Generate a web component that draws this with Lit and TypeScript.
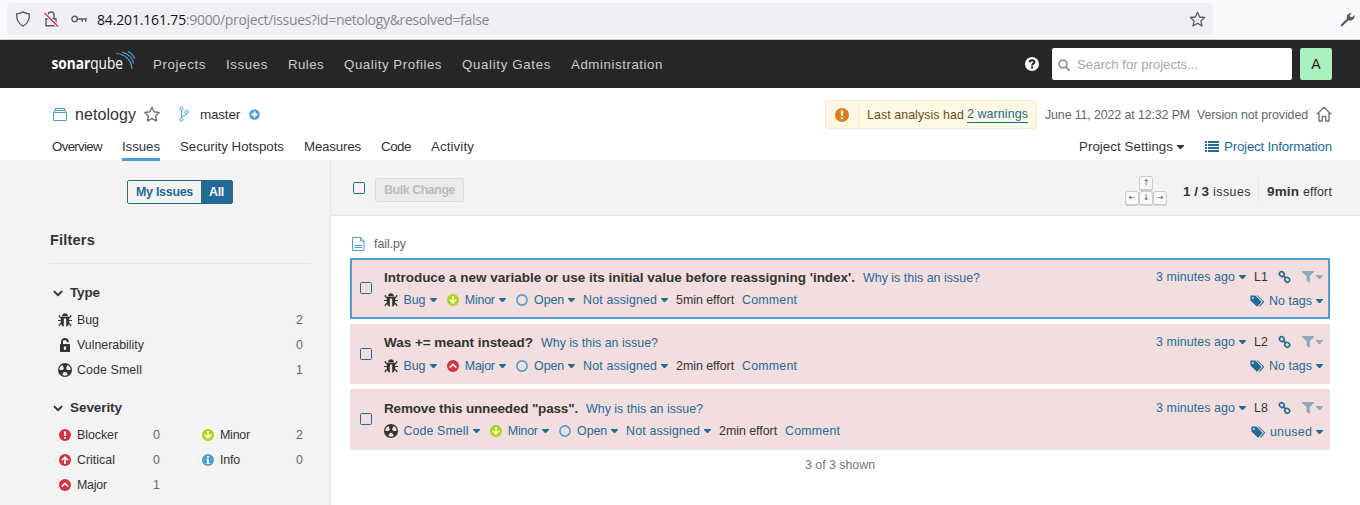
import { LitElement, html, css, svg, TemplateResult } from "lit";
import { customElement, property } from "lit/decorators.js";

/* A run of text whose tracking is computed so that it fills a given width. */
@customElement("ui-text")
class UiText extends LitElement {
  @property() t = "";
  @property({ type: Number }) w = 0;
  static styles = css`
    :host { display: inline-block; white-space: pre; flex: none; }
  `;
  render() {
    return html`<span>${this.t}</span>`;
  }
  updated() {
    const span = this.renderRoot.querySelector("span") as HTMLElement;
    this.style.letterSpacing = "0px";
    const natural = span.getBoundingClientRect().width;
    this.style.letterSpacing = `${(this.w - natural) / this.t.length}px`;
    this.style.width = `${this.w}px`;
  }
}

const T = (t: string, w: number, cls = "") => html`<ui-text class=${cls} t=${t} w=${w}></ui-text>`;

const sector = (deg: number) => {
  const p = (r: number, a: number) => {
    const q = (a * Math.PI) / 180;
    return `${(7 + r * Math.cos(q)).toFixed(2)} ${(7 + r * Math.sin(q)).toFixed(2)}`;
  };
  return `M${p(2, deg - 30)}L${p(5.6, deg - 31)}A5.6 5.6 0 0 1 ${p(5.6, deg + 31)}L${p(2, deg + 30)}A2 2 0 0 0 ${p(2, deg - 30)}Z`;
};

const icon = (w: number, h: number, body: TemplateResult | unknown) =>
  html`<svg class="ic" width=${w} height=${h} viewBox="0 0 ${w} ${h}">${body}</svg>`;

const bug = () => icon(14, 14, svg`
  <path fill="#333" d="M4 3.200C4.200 1.300 5.400.2 7 .2s2.800 1.100 3 3z"/>
  <path fill="#333" fill-rule="evenodd" d="M2.800 3.700h8.400v5.500c0 2.500-1.500 4.200-3 4.600V5.500H5.800v8.300c-1.500-.4-3-2.100-3-4.600z"/>
  <path fill="none" stroke="#333" stroke-width="1.200" d="M3.600 5.200 1.300 3.500V2M0 7.500h3.200M3.600 10l-2.300 1.700v1.500M10.400 5.200l2.300-1.700V2M14 7.500h-3.200M10.400 10l2.300 1.700v1.500"/>`);
const lock = () => icon(14, 14, svg`
  <path fill="none" stroke="#333" stroke-width="1.900" d="M4 7V3.700C4 2 5.100 1 6.900 1s2.900 1 2.900 2.700v.6"/>
  <path fill="#333" fill-rule="evenodd" d="M2.600 6.100h8.800q.6 0 .6.600v6.700q0 .6-.6.600H2.600q-.6 0-.6-.6V6.700q0-.6.600-.6zM7 8.200a1.400 1.400 0 0 0-.8 2.500V12h1.600v-1.300A1.400 1.400 0 0 0 7 8.200z"/>`);
const smell = (bg: string) => icon(14, 14, svg`
  <circle cx="7" cy="7" r="7" fill="#333"/>
  ${[90, 210, 330].map((d) => svg`<path d=${sector(d)} fill=${bg}/>`)}
  <circle cx="7" cy="7" r="1.300" fill="#333"/>`);

const sev: Record<string, () => TemplateResult> = {
  Blocker: () => icon(12, 12, svg`<circle cx="6" cy="6" r="6" fill="#d4333f"/><path fill="#fff" d="M5 2.200h2L6.800 7H5.200zM5.100 8h1.800v1.700H5.100z"/>`),
  Critical: () => icon(12, 12, svg`<circle cx="6" cy="6" r="6" fill="#d4333f"/><path fill="none" stroke="#fff" stroke-width="1.600" d="M6 10V3M2.800 6.300 6 3.100l3.200 3.200"/>`),
  Major: () => icon(12, 12, svg`<circle cx="6" cy="6" r="6" fill="#d4333f"/><path fill="none" stroke="#fff" stroke-width="1.600" d="M2.700 7.600 6 4.400l3.300 3.200"/>`),
  Minor: () => icon(12, 12, svg`<circle cx="6" cy="6" r="6" fill="#b0d513"/><path fill="none" stroke="#fff" stroke-width="1.600" d="M6 2v7M2.800 5.700 6 8.900l3.200-3.200"/>`),
  Info: () => icon(12, 12, svg`<circle cx="6" cy="6" r="6" fill="#4b9fd5"/><path fill="#fff" d="M5 2.200h2v1.700H5zM4.500 4.900H7v4h.6v1H4.500v-1H5v-3h-.5z"/>`),
};

const open = () => icon(12, 12, svg`<circle cx="6" cy="6" r="5.100" fill="none" stroke="#4b9fd5" stroke-width="1.600"/>`);
const caret = (c: string) => icon(7, 4, svg`<path fill=${c} d="M0 0h7v.8L4.100 4H2.900L0 .8z"/>`);
const chevron = () => icon(10, 7, svg`<path fill="none" stroke="#333" stroke-width="2" d="M.9 1.100 5 5.200l4.100-4.100"/>`);
const link = () => icon(13, 12, svg`
  <g fill="none" stroke="#236a97" stroke-width="1.600"><rect x="1.300" y=".9" width="5" height="4.400" rx="2.100" transform="rotate(42 3.800 3.100)"/>
  <rect x="6.700" y="6.600" width="5" height="4.400" rx="2.100" transform="rotate(42 9.200 8.800)"/><path d="m5 4.400 3 3"/></g>`);
const funnel = () => icon(12, 12, svg`<path fill="#8fa9be" d="M.1 0h11.800v1L7.800 5.200V12L4.600 9.700V5.200L.1 1z"/>`);
const tags = () => icon(15, 12, svg`
  <path fill="#236a97" fill-rule="evenodd" d="M.4.600h4.900l5.800 5.600q.5.600 0 1.200l-3.500 3.800q-.6.500-1.200 0L.4 5.500zM2.800 2a1 1 0 1 0 .1 2 1 1 0 0 0-.1-2z"/>
  <path fill="#236a97" d="M6.600.600h1.300l5.900 5.600q.5.600 0 1.200l-3.600 3.800q-.7.600-1.400 0l3.600-3.900q.5-.6 0-1.200z"/>`);

interface Issue {
  title: string; tw: number; type: "Bug" | "Code Smell"; severity: string; effort: string;
  line: string; tag: string; tagw: number; selected?: boolean;
}
const issues: Issue[] = [
  { title: "Introduce a new variable or use its initial value before reassigning 'index'.", tw: 471, type: "Bug", severity: "Minor", effort: "5min effort", line: "L1", tag: "No tags", tagw: 43, selected: true },
  { title: "Was += meant instead?", tw: 149, type: "Bug", severity: "Major", effort: "2min effort", line: "L2", tag: "No tags", tagw: 43 },
  { title: 'Remove this unneeded "pass".', tw: 194, type: "Code Smell", severity: "Minor", effort: "2min effort", line: "L8", tag: "unused", tagw: 42 },
];

@customElement("app-root")
class AppRoot extends LitElement {
  static styles = css`
    :host { display: block; width: 1360px; height: 505px; overflow: hidden; background: #fff; color: #333;
      font: 12.4px/16px "Liberation Sans", Arial, sans-serif; }
    * { box-sizing: border-box; }
    .ic { display: block; flex: none; overflow: visible; }
    .row { display: flex; align-items: center; }
    .grow { flex: 1; }
    .f13 { font-size: 13.5px; }
    .f14 { font-size: 14.5px; }
    .f16 { font-size: 16px; }
    .b { font-weight: 700; }
    .blue { color: #236a97; }
    .dark { color: #333; }

    .chrome { height: 40px; background: #f9f9fb; border-bottom: 1px solid #ccccd0; padding: 3px 4px 4px 7px; display: flex; align-items: center; }
    .url { width: 1206px; height: 32px; border-radius: 4px; background: #f0f0f4; padding: 0 7px 0 8px; margin-right: 127px; }
    .addr { font: 14px/20px "Open Sans", "Noto Sans", sans-serif; color: #85858c; margin-top: 2px; }
    .addr.host { color: #15141a; margin-left: 10px; }

    .top { height: 48px; background: #262626; padding: 0 28px 0 52px; }
    .logo { margin-right: 17px; }
    .menu { gap: 20px; color: #ccc; font-size: 13.3px; padding-top: 1px; }
    .search { width: 240px; height: 32px; background: #fff; border-radius: 2px; margin: 0 8px 0 13px; padding: 1px 0 0 6px; gap: 7px; color: #a9a9a9; font-size: 13.3px; }
    .avatar { width: 32px; height: 32px; border-radius: 2px; background: #aaf0c0; justify-content: center; font-size: 14px; color: #222; }

    .proj { height: 53px; padding: 0 28px 0 53px; }
    .proj > .ic { margin-bottom: 2px; }
    .proj > .ic.ic:nth-of-type(4) { margin-bottom: 0; }
    .warn { height: 29px; width: 212px; border: 1px solid #faebcc; border-radius: 2px; background: #fcf8e3; color: #6f4f17; margin-right: 8px; }
    .warn-ic { width: 33px; height: 27px; border-right: 1px solid #faebcc; justify-content: center; margin-right: 8px; }
    .under { border-bottom: 1px solid #236a97; line-height: 15px; height: 16px; margin-left: 3px; margin-top: 1px; }
    .muted { color: #666; }

    .tabs { height: 19px; padding: 0 28px 0 52px; align-items: flex-start; font-size: 13.3px; margin-top: -2px; position: relative; }
    .tab { height: 22px; margin-right: 20px; }
    .tab.on { border-bottom: 3px solid #4b9fd5; }
    .tabs .caret { margin: 6px 21px 0 4px; }
    .tabs .list { margin: 2px 5px 0 0; }

    .body { display: flex; height: 345px; margin-top: 2px; }
    .side { width: 331px; background: #f3f3f3; border-right: 1px solid #e6e6e6; padding: 20px 20px 0 50px; }
    .seg { width: 106px; height: 24px; margin-left: 77px; border: 1px solid #236a97; border-radius: 2px; color: #236a97; font-weight: 700; }
    .seg .a { width: 73px; justify-content: center; }
    .seg .c { width: 31px; height: 22px; background: #236a97; color: #fff; justify-content: center; }
    .filters { height: 60px; padding-top: 28px; border-bottom: 1px solid #e6e6e6; }
    .facet { height: 25px; padding: 0 7px 0 8px; }
    .facet.head { padding-left: 3px; height: 16px; }
    .head.one { margin: 21px 0 6px; }
    .head.two { margin: 18px 0 6px; }
    .facet .name { margin-left: 5px; }
    .head .label { margin-left: 7px; }
    .sevs { display: grid; grid-template-columns: 117px 143px; }
    .sevs .facet { padding-left: 9px; }
    .sevs .facet.l { padding-right: 7px; }
    .sevs .facet.r { padding-left: 35px; }
    .sevs .name { margin-left: 6px; }

    .main { flex: 1; }
    .tool { height: 56px; background: #f3f3f3; border-bottom: 1px solid #e6e6e6; padding: 7px 28px 0 22px; }
    .tool > .box { margin-bottom: 7px; }
    .tool > ui-text { margin-top: 2px; }
    .box { width: 12px; height: 12px; border: 1px solid #236a97; border-radius: 1.5px; flex: none; }
    .bulk { width: 89px; height: 24px; margin: -3px 0 0 10px; border: 1px solid #ddd; border-radius: 2px; background: #ebebeb; color: #bbb; justify-content: center; font-weight: 700; }
    .keys { display: grid; grid-template-columns: repeat(3, 14px); grid-template-rows: 15px 15px; margin-right: 16px; }
    .key { width: 14px; height: 15px; border: 1px solid #ccc; border-bottom-width: 2px; border-radius: 3px; background: #f9f9f9; color: #555; font: 8px/12px "DejaVu Sans", sans-serif; text-align: center; }
    .key.up { grid-column: 2; }
    .key.lf { grid-column: 1; }
    .sep { width: 1px; height: 24px; background: #e6e6e6; margin: 0 8px 0 7px; }

    .file { height: 42px; padding: 14px 0 0 21px; gap: 9px; color: #666; }
    .issue { width: 980px; height: 60.67px; margin: 0 0 5px 19px; background: #f2dede; display: flex; border: 2px solid transparent; }
    .issue.sel { border-color: #4b9fd5; }
    .issue .box { margin: 22px 12px 0 8px; }
    .mid { flex: 1; padding-top: 9px; }
    .title { height: 16px; margin-bottom: 7px; padding-top: 1px; }
    .why { margin-left: 8px; }
    .meta > .a { margin-left: 6px; }
    .meta > .first { margin-left: 5.5px; }
    .meta > .m { margin-left: 6px; }
    .cr { margin: 0 0 0 4px; }
    .nx { margin-left: 10.3px; }
    .n8 { margin-left: 8px; }
    .n7 { margin-left: 7px; }
    .right { display: flex; flex-direction: column; align-items: flex-end; padding: 8px 5px 0 0; }
    .right > .row { height: 17px; margin-bottom: 7px; }
    .right .l10 { margin-left: 10px; }
    .right .l11 { margin-left: 11px; }
    .right .l4 { margin-left: 4px; }
    .dim { margin-left: 2px; }
    .shown { text-align: center; color: #777; padding-top: 2px; width: 1018px; }
  `;

  private facet(ic: unknown, name: string, w: number, n: string, cls = "") {
    return html`<div class="row facet ${cls}">${ic}<span class="name row">${T(name, w)}</span><span class="grow"></span>
      <span class="muted row">${T(n, 7)}</span></div>`;
  }

  private issue(i: Issue) {
    const c = "#236a97";
    return html`<div class="issue ${i.selected ? "sel" : ""}">
      <span class="box"></span>
      <div class="mid">
        <div class="row title">${T(i.title, i.tw, "f13 b")}${T("Why is this an issue?", 117, "why blue")}</div>
        <div class="row meta blue">
          ${i.type === "Bug" ? bug() : smell("#f2dede")}
          ${T(i.type, i.type === "Bug" ? 22 : 65, "first")}<span class="cr">${caret(c)}</span>
          <span class="nx">${sev[i.severity]()}</span>${T(i.severity, 30, "a")}<span class="cr">${caret(c)}</span>
          <span class="nx">${open()}</span>${T("Open", 30, "m")}<span class="cr">${caret(c)}</span>
          ${T("Not assigned", 74, "n8")}<span class="cr">${caret(c)}</span>
          <span class="n8 row dark">${T(i.effort, 58)}</span>${T("Comment", 55, "n8")}
        </div>
      </div>
      <div class="right blue">
        <div class="row">${T("3 minutes ago", 79)}<span class="cr">${caret(c)}</span>
          <span class="n8 row dark">${T(i.line, 14)}</span><span class="l10">${link()}</span>
          <span class="l11">${funnel()}</span><span class="dim">${caret("#8fa9be")}</span></div>
        <div class="row">${tags()}<span class="row l4">${T(i.tag, i.tagw)}</span><span class="cr">${caret(c)}</span></div>
      </div>
    </div>`;
  }

  render() {
    return html`
      <div class="chrome">
        <div class="row url">
          ${icon(16, 18, svg`<path fill="none" stroke="#5b5b66" stroke-width="1.400" stroke-linejoin="round" d="M8 1.800c2 1.300 4 1.900 6.300 2.100.4 5.500-1.500 9.700-6.300 12.300C3.200 13.600 1.300 9.400 1.700 3.900 4 3.700 6 3.100 8 1.800z"/>`)}
          <span style="width:12px"></span>
          ${icon(16, 18, svg`<path fill="none" stroke="#5b5b66" stroke-width="1.400" d="M3 8.700h10v7H3zM5 8.500V5a3 3 0 0 1 6 0v3.500"/><path stroke="#f0f0f4" stroke-width="3.500" d="m1.500 3 13 13"/><path stroke="#e22850" stroke-width="1.300" d="m1.500 3 13.500 13.500"/>`)}
          <span style="width:12px"></span>
          ${icon(16, 10, svg`<circle cx="3.600" cy="5" r="2.700" fill="none" stroke="#5b5b66" stroke-width="1.400"/><path fill="none" stroke="#5b5b66" stroke-width="1.400" d="M6.300 5H16M11.200 5v3M14.700 5v3"/>`)}
          ${T("84.201.161.75", 89, "addr host")}${T(":9000/project/issues?id=netology&resolved=false", 303, "addr")}
          <span class="grow"></span>
          ${icon(17, 17, svg`<path fill="none" stroke="#5b5b66" stroke-width="1.300" stroke-linejoin="round" d="m8.500 1.300 2.100 4.700 5.100.5-3.900 3.400 1.200 5-4.500-2.700L4 14.900l1.200-5-3.900-3.400 5.100-.5z"/>`)}
        </div>
        ${icon(15, 15, svg`<path stroke="#5b5b66" stroke-width="2.200" stroke-linecap="round" d="m1.800 13.200 7-7"/><path fill="#5b5b66" d="M7 6.700C6 3 8.400.6 11.800 1L9.900 3.100l.3 1.700 1.900.5L14.500 3c.6 3.700-2.300 6.100-5.500 5.600z"/>`)}
      </div>

      <div class="row top">
        <svg class="ic logo" width="84" height="32" viewBox="0 0 84 32">
          <text x="-.5" y="21" font-family="Open Sans" font-size="16" fill="#fff" textLength="71.500" lengthAdjust="spacingAndGlyphs"><tspan font-weight="700">sonar</tspan><tspan>qube</tspan></text>
          <g fill="none" stroke="#4b9fd5" stroke-width="1.200"><path d="M64 5.500c9 .3 15.500 6.500 16 15.500"/><path d="M70 4c6.500 1.800 10.400 6 11.600 11.500"/><path d="M76 3.500c3.500 1.700 5.400 4 6.600 7"/></g>
        </svg>
        <div class="row menu">
          ${T("Projects", 53)}${T("Issues", 42)}${T("Rules", 36)}${T("Quality Profiles", 98)}${T("Quality Gates", 89)}${T("Administration", 92)}
        </div>
        <span class="grow"></span>
        ${icon(14, 14, svg`<circle cx="7" cy="7" r="7" fill="#fff"/><path fill="none" stroke="#262626" stroke-width="2" d="M4.600 5.300C4.800 3.900 5.700 3.300 7 3.300c1.400 0 2.400.7 2.400 1.900C9.400 6.700 7 6.700 7 8.500"/><path fill="#262626" d="M6 9.500h2v1.900H6z"/>`)}
        <div class="row search">
          ${icon(12, 12, svg`<circle cx="5" cy="5" r="3.900" fill="none" stroke="#999" stroke-width="1.900"/><path stroke="#999" stroke-width="2.100" stroke-linecap="round" d="m8.200 8.200 2.700 2.700"/>`)}
          ${T("Search for projects...", 121)}
        </div>
        <div class="row avatar">A</div>
      </div>

      <div class="row proj">
        ${icon(14, 14, svg`<path fill="none" stroke="#4b9fd5" d="M.5 5.500h13v8H.5zM1.500 5.500v-2h11v2M2.500 3.500v-2h9v2"/>`)}
        <span style="width:8px"></span>${T("netology", 61, "f16")}<span style="width:8px"></span>
        ${icon(16, 16, svg`<path fill="none" stroke="#777" stroke-width="1.500" stroke-linejoin="round" d="m8 1.200 2.200 4.600 5 .7-3.600 3.500.9 5L8 12.600 3.500 15l.9-5L.8 6.500l5-.7z"/>`)}
        <span style="width:19px"></span>
        ${icon(10, 16, svg`<g fill="none" stroke="#4b9fd5"><circle cx="2.500" cy="2.500" r="1.600"/><circle cx="2.500" cy="13.500" r="1.600"/><circle cx="7.700" cy="6" r="1.600"/><path d="M2.500 4v8M7.500 7.600c-.3 1.700-1.500 2.300-5 2.700"/></g>`)}
        <span style="width:11px"></span>${T("master", 40, "f13")}<span style="width:9px"></span>
        ${icon(11, 11, svg`<circle cx="5.500" cy="5.500" r="5.300" fill="#4b9fd5"/><path stroke="#fff" stroke-width="1.800" d="M5.500 2.500v6M2.500 5.500h6"/>`)}
        <span class="grow"></span>
        <div class="row warn">
          <span class="row warn-ic">${icon(14, 14, svg`<circle cx="7" cy="7" r="7" fill="#e07c1c"/><path fill="#fcf8e3" d="M5.700 2.600h2.600L8 8H6zM5.800 9.200h2.400v2.100H5.800z"/>`)}</span>
          ${T("Last analysis had", 97)}${T("2 warnings", 61, "under blue")}
        </div>
        <span class="muted row">${T("June 11, 2022 at 12:32 PM", 145)}<span style="width:7px"></span>${T("Version not provided", 111)}</span>
        <span style="width:8px"></span>
        ${icon(16, 16, svg`<path fill="none" stroke="#777" stroke-width="1.400" stroke-linejoin="round" d="M.8 8.300 8 1.200l7.200 7.100M3 7v8h3.300v-4.500h3.400V15H13V7"/>`)}
      </div>

      <div class="row tabs">
        ${T("Overview", 50, "tab")}${T("Issues", 38, "tab on")}${T("Security Hotspots", 104, "tab")}${T("Measures", 57, "tab")}${T("Code", 30, "tab")}${T("Activity", 43, "tab")}
        <span class="grow"></span>
        ${T("Project Settings", 94)}<span class="caret">${caret("#333")}</span>
        <span class="list">${icon(14, 11, svg`<path fill="#236a97" d="M0 0h2v2H0zM3 0h11v2H3zM0 3h2v2H0zM3 3h11v2H3zM0 6h2v2H0zM3 6h11v2H3zM0 9h2v2H0zM3 9h11v2H3z"/>`)}</span>
        ${T("Project Information", 108, "blue")}
      </div>

      <div class="body">
        <div class="side">
          <div class="row seg"><span class="row a">${T("My Issues", 57)}</span><span class="row c">${T("All", 15)}</span></div>
          <div class="filters">${T("Filters", 45, "f14 b")}</div>
          <div class="row facet head one">${chevron()}<span class="row label">${T("Type", 30, "f13 b")}</span></div>
          ${this.facet(bug(), "Bug", 22, "2")}
          ${this.facet(lock(), "Vulnerability", 67, "0")}
          ${this.facet(smell("#f3f3f3"), "Code Smell", 65, "1")}
          <div class="row facet head two">${chevron()}<span class="row label">${T("Severity", 52, "f13 b")}</span></div>
          <div class="sevs">
            ${this.facet(sev.Blocker(), "Blocker", 41, "0", "l")}${this.facet(sev.Minor(), "Minor", 30, "2", "r")}
            ${this.facet(sev.Critical(), "Critical", 38, "0", "l")}${this.facet(sev.Info(), "Info", 20, "0", "r")}
            ${this.facet(sev.Major(), "Major", 30, "1", "l")}
          </div>
        </div>
        <div class="main">
          <div class="row tool">
            <span class="box"></span><span class="row bulk">${T("Bulk Change", 71)}</span><span class="grow"></span>
            <div class="keys"><span class="key up">↑</span><span class="key lf">←</span><span class="key">↓</span><span class="key">→</span></div>
            ${T("1 / 3", 26, "b f13")}<span style="width:4px"></span>${T("issues", 38)}
            <span class="sep"></span>${T("9min", 32, "b f13")}<span style="width:4px"></span>${T("effort", 29)}
          </div>
          <div class="row file">
            ${icon(13, 14, svg`<path fill="none" stroke="#4b9fd5" d="M.5.500h8l3.500 3.500v9.500H.5zM8.500.500v3.500H12M2.500 8.500h7.500M2.500 10.500h7.500"/>`)}
            ${T("fail.py", 32)}
          </div>
          ${issues.map((i) => this.issue(i))}
          <div class="shown">${T("3 of 3 shown", 70)}</div>
        </div>
      </div>
    `;
  }
}
